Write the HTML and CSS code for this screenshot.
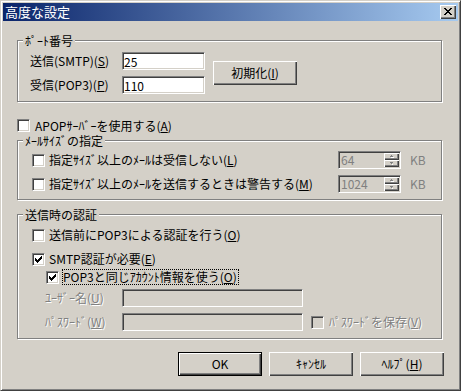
FILE: index.html
```html
<!DOCTYPE html>
<html lang="ja">
<head>
    <meta charset="UTF-8">
    <title>高度な設定</title>
    <link rel="stylesheet" href="styles.css">
</head>
<body>
<div class="window">
    <div class="titlebar">
        <span class="title">高度な設定</span>
        <button class="close-btn" aria-label="閉じる">
            <svg width="8" height="7" viewBox="0 0 8 7">
                <rect x="0" y="0" width="2" height="1"/><rect x="6" y="0" width="2" height="1"/>
                <rect x="1" y="1" width="2" height="1"/><rect x="5" y="1" width="2" height="1"/>
                <rect x="2" y="2" width="4" height="1"/>
                <rect x="3" y="3" width="2" height="1"/>
                <rect x="2" y="4" width="4" height="1"/>
                <rect x="1" y="5" width="2" height="1"/><rect x="5" y="5" width="2" height="1"/>
                <rect x="0" y="6" width="2" height="1"/><rect x="6" y="6" width="2" height="1"/>
            </svg>
        </button>
    </div>

    <!-- ポート番号 -->
    <div class="group group-port">
        <span class="legend">ﾎﾟｰﾄ番号</span>
        <div class="port-fields">
            <div class="field-row">
                <label class="field-label" for="smtpPort">送信(SMTP)(<u>S</u>)</label>
                <input class="edit port-edit" id="smtpPort" value="25">
            </div>
            <div class="field-row">
                <label class="field-label" for="popPort">受信(POP3)(<u>P</u>)</label>
                <input class="edit port-edit" id="popPort" value="110">
            </div>
        </div>
        <button class="push-btn init-btn">初期化(<u>I</u>)</button>
    </div>

    <label class="check-row apop-row">
        <span class="checkbox"></span>APOPｻｰﾊﾞｰを使用する(<u>A</u>)
    </label>

    <!-- メールサイズの指定 -->
    <div class="group group-size">
        <span class="legend">ﾒｰﾙｻｲｽﾞの指定</span>
        <div class="size-row">
            <label class="check-row">
                <span class="checkbox"></span>指定ｻｲｽﾞ以上のﾒｰﾙは受信しない(<u>L</u>)
            </label>
            <div class="spin">
                <span class="spin-value">64</span>
                <span class="spin-btns">
                    <span class="spin-btn"><svg width="5" height="3" viewBox="0 0 5 3"><rect x="2" y="0" width="1" height="1" fill="#808080"/><rect x="1" y="1" width="3" height="1" fill="#808080"/><rect x="2" y="2" width="3" height="1" fill="#fff"/></svg></span>
                    <span class="spin-btn"><svg width="5" height="3" viewBox="0 0 5 3"><rect x="1" y="0" width="3" height="1" fill="#808080"/><rect x="2" y="1" width="1" height="1" fill="#808080"/><rect x="3" y="2" width="1" height="1" fill="#fff"/></svg></span>
                </span>
            </div>
            <span class="unit">KB</span>
        </div>
        <div class="size-row">
            <label class="check-row">
                <span class="checkbox"></span>指定ｻｲｽﾞ以上のﾒｰﾙを送信するときは警告する(<u>M</u>)
            </label>
            <div class="spin">
                <span class="spin-value">1024</span>
                <span class="spin-btns">
                    <span class="spin-btn"><svg width="5" height="3" viewBox="0 0 5 3"><rect x="2" y="0" width="1" height="1" fill="#808080"/><rect x="1" y="1" width="3" height="1" fill="#808080"/><rect x="2" y="2" width="3" height="1" fill="#fff"/></svg></span>
                    <span class="spin-btn"><svg width="5" height="3" viewBox="0 0 5 3"><rect x="1" y="0" width="3" height="1" fill="#808080"/><rect x="2" y="1" width="1" height="1" fill="#808080"/><rect x="3" y="2" width="1" height="1" fill="#fff"/></svg></span>
                </span>
            </div>
            <span class="unit">KB</span>
        </div>
    </div>

    <!-- 送信時の認証 -->
    <div class="group group-auth">
        <span class="legend">送信時の認証</span>
        <label class="check-row auth-row">
            <span class="checkbox"></span>送信前にPOP3による認証を行う(<u>O</u>)
        </label>
        <label class="check-row auth-row smtp-row">
            <span class="checkbox">
                <svg width="7" height="7" viewBox="0 0 7 7"><rect x="6" y="0" width="1" height="1"/><rect x="5" y="1" width="2" height="1"/><rect x="0" y="2" width="1" height="1"/><rect x="4" y="2" width="3" height="1"/><rect x="0" y="3" width="2" height="1"/><rect x="3" y="3" width="3" height="1"/><rect x="0" y="4" width="5" height="1"/><rect x="1" y="5" width="3" height="1"/><rect x="2" y="6" width="1" height="1"/></svg>
            </span>SMTP認証が必要(<u>E</u>)
        </label>
        <label class="check-row auth-row same-row">
            <span class="checkbox">
                <svg width="7" height="7" viewBox="0 0 7 7"><rect x="6" y="0" width="1" height="1"/><rect x="5" y="1" width="2" height="1"/><rect x="0" y="2" width="1" height="1"/><rect x="4" y="2" width="3" height="1"/><rect x="0" y="3" width="2" height="1"/><rect x="3" y="3" width="3" height="1"/><rect x="0" y="4" width="5" height="1"/><rect x="1" y="5" width="3" height="1"/><rect x="2" y="6" width="1" height="1"/></svg>
            </span><span class="focus">POP3と同じｱｶｳﾝﾄ情報を使う(<u>O</u>)</span>
        </label>
        <div class="account-row user-row">
            <span class="account-label disabled">ﾕｰｻﾞｰ名(<u>U</u>)</span>
            <span class="edit account-edit"></span>
        </div>
        <div class="account-row pass-row">
            <span class="account-label disabled">ﾊﾟｽﾜｰﾄﾞ(<u>W</u>)</span>
            <span class="edit account-edit"></span>
            <span class="check-row save-row disabled">
                <span class="checkbox off"></span>ﾊﾟｽﾜｰﾄﾞを保存(<u>V</u>)
            </span>
        </div>
    </div>

    <div class="dialog-buttons">
        <button class="push-btn default-btn">OK</button>
        <button class="push-btn">ｷｬﾝｾﾙ</button>
        <button class="push-btn">ﾍﾙﾌﾟ(<u>H</u>)</button>
    </div>
</div>
</body>
</html>
```

FILE: styles.css
```css
* {
    box-sizing: border-box;
}
body {
    margin: 0;
    background: #D4D0C8;
    font-family: "Noto Sans CJK JP", "Liberation Sans", sans-serif;
    font-size: 12px;
    line-height: 14px;
    color: #000;
}
u {
    text-decoration: underline;
    text-underline-offset: 1px;
}

.window {
    width: 461px;
    height: 391px;
    padding: 2px;
    border: 1px solid;
    border-color: #D4D0C8 #404040 #404040 #D4D0C8;
    box-shadow: inset 1px 1px #fff, inset -1px -1px #808080;
    background: #D4D0C8;
}
.titlebar {
    height: 18px;
    display: flex;
    align-items: center;
    justify-content: space-between;
    padding: 0 2px;
    background: linear-gradient(to right, #0A246A, #A6CAF0);
    color: #fff;
}
.title {
    font-size: 13px;
}
.close-btn {
    width: 16px;
    height: 14px;
    padding: 0 0 1px 0;
    border: 0;
    background: #D4D0C8;
    box-shadow: inset 1px 1px #fff, inset -1px -1px #404040, inset -2px -2px #808080;
    display: flex;
    align-items: center;
    justify-content: center;
}

/* group boxes */
.group {
    position: relative;
    margin-left: 14px;
    width: 425px;
    border: 1px solid #808080;
    box-shadow: inset 1px 1px #fff, 1px 1px #fff;
}
.legend {
    position: absolute;
    top: -6px;
    left: 5px;
    padding: 0 2px;
    line-height: 12px;
    background: #D4D0C8;
}

.group-port {
    margin-top: 19px;
    height: 62px;
    display: flex;
    align-items: flex-start;
    padding: 11px 0 0 12px;
}
.port-fields {
    display: flex;
    flex-direction: column;
    gap: 6px;
}
.field-row {
    display: flex;
    align-items: center;
    height: 18px;
}
.field-label {
    width: 92px;
}
.edit {
    display: block;
    height: 18px;
    padding: 0 1px;
    border: 1px solid;
    border-color: #808080 #fff #fff #808080;
    box-shadow: inset 1px 1px #404040, inset -1px -1px #D4D0C8;
    background: #fff;
    font: inherit;
    color: #000;
    outline: none;
}
.port-edit {
    width: 83px;
}
.push-btn {
    height: 24px;
    width: 84px;
    padding: 0;
    border: 0;
    background: #D4D0C8;
    box-shadow: inset 1px 1px #fff, inset -1px -1px #404040, inset -2px -2px #808080;
    font: inherit;
    color: #000;
}
.init-btn {
    margin: 9px 0 0 8px;
}

/* checkboxes */
.check-row {
    display: flex;
    align-items: center;
    height: 18px;
    white-space: nowrap;
}
.checkbox {
    flex: none;
    width: 13px;
    height: 13px;
    margin-right: 4px;
    display: flex;
    align-items: center;
    justify-content: center;
    border: 1px solid;
    border-color: #808080 #fff #fff #808080;
    box-shadow: inset 1px 1px #404040, inset -1px -1px #D4D0C8;
    background: #fff;
}
.checkbox.off {
    background: #D4D0C8;
}
.apop-row {
    margin: 17px 0 0 14px;
    height: 13px;
    line-height: 13px;
}
.apop-row .checkbox {
    margin-right: 5px;
}

.group-size {
    margin-top: 8px;
    height: 60px;
    padding: 10px 0 0 14px;
    display: flex;
    flex-direction: column;
    gap: 6px;
}
.size-row {
    display: flex;
    align-items: center;
    height: 18px;
}
.spin {
    margin-left: auto;
    width: 63px;
    height: 18px;
    display: flex;
    border: 1px solid;
    border-color: #808080 #fff #fff #808080;
    box-shadow: inset 1px 1px #404040, inset -1px -1px #D4D0C8;
    padding: 1px;
}
.spin-value {
    flex: 1;
    padding-left: 1px;
    color: #808080;
    line-height: 14px;
}
.spin-btns {
    width: 15px;
    display: flex;
    flex-direction: column;
}
.spin-btn {
    flex: 1;
    display: flex;
    align-items: center;
    justify-content: center;
    box-shadow: inset 1px 1px #fff, inset -1px -1px #404040, inset -2px -2px #808080;
}
.spin-btn svg {
    display: block;
}
.unit {
    width: 40px;
    padding-left: 9px;
    color: #808080;
}

.group-auth {
    margin-top: 14px;
    height: 125px;
    padding: 11px 0 0 14px;
}
.smtp-row {
    margin-top: 6px;
}
.same-row {
    padding-left: 14px;
}
.focus {
    border: 1px dotted #000;
    padding: 0 1px 0 0;
    margin-left: -1px;
    line-height: 14px;
}
.account-row {
    display: flex;
    align-items: center;
    height: 18px;
    padding-left: 13px;
}
.user-row {
    margin-top: 3px;
}
.pass-row {
    margin-top: 6px;
}
.account-label {
    width: 77px;
}
.account-edit {
    width: 181px;
    background: #D4D0C8;
}
.disabled {
    color: #808080;
    text-shadow: 1px 1px 0 #fff;
}
.save-row {
    margin-left: 8px;
}
.save-row .checkbox {
    margin-right: 5px;
}

.dialog-buttons {
    margin-top: 13px;
    display: flex;
    justify-content: flex-end;
    gap: 7px;
    padding-right: 14px;
}
.default-btn {
    border: 1px solid #000;
}
```
